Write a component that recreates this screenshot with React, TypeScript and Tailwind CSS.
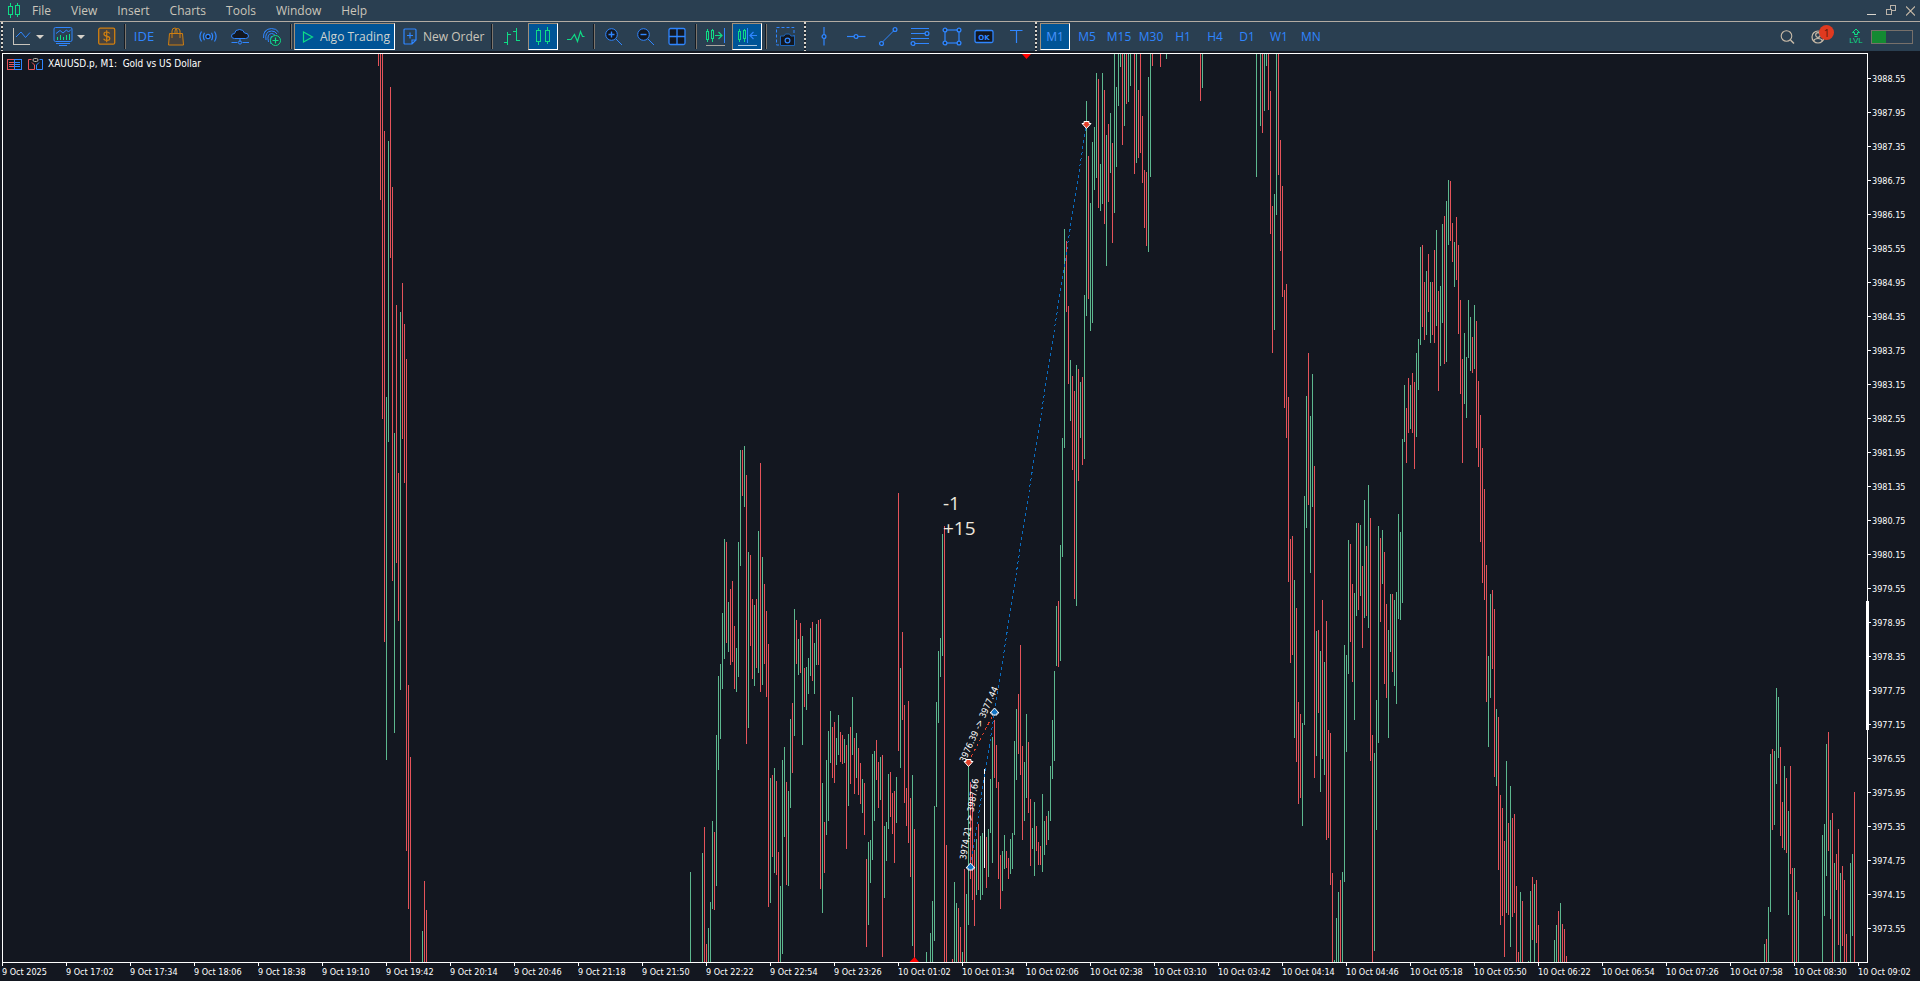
import type { ReactNode } from "react";

const UP = "#5db88f";
const DOWN = "#e5535a";
const BLUE = "#2f86ff";
const GREEN = "#0fdc86";
const INK = "#131720";
const SAND = "#c9bba8";

/* Runs of one-minute bars: first x, then one "<direction><high>-<low>" per 2px slot, "." for an empty slot. */
const RUNS: [number, string][] = [
  [378, "r54-66 r54-200 r54-419 r131-642 g397-760 g141-442 r87-258 r187-581 g433-733 r305-563 r473-621 g312-690 r283-439 r324-483 r359-851 r685-909 r757-962 . . . . . g931-962 r881-962 r910-962"],
  [690, "g872-962 . . . . . g853-962 r827-962 r944-962 g928-962 g902-962 g821-909 r832-910 g735-886 g676-770 g664-739 g613-689 g539-659 r542-643 g602-652 r589-665 r581-662 r626-689 g648-692 g542-677 g450-566 r450-496 g446-507 r475-744 g552-728 r555-646 r599-679 g605-686 r599-668 g531-673 r463-692 g557-685 r584-664 r611-697 r644-907"],
  [770, "g778-903 r775-857 g768-873 r781-875 r852-962 g886-962 g760-954 g747-837 r782-885 g791-886 g719-808 r703-773 g609-736 r620-664 g639-675 r623-673 g636-745 r668-707 g667-710 g658-694 g628-676 r622-681 g643-694 g624-665 r620-665 r619-889 g783-913 r822-873 g760-835 g731-821 g711-763 r727-778 r722-783 g738-765 g715-755 r732-762 r735-764 g739-763 r745-849 g734-806"],
  [850, "r727-784 g697-755 r738-794 g733-778 r748-795 r763-804 g779-813 r783-835 r859-947 g842-925 g840-883 g754-860 g751-821 r740-780 r762-808 g757-800 r755-957 g826-898 g822-861 g774-829 r772-817 r793-834 r791-863 g777-823 r493-751 g668-768 r632-720 r705-803 r788-826 r701-843 r798-877 g775-946 r829-962"],
  [926, "g952-962 . g933-962 g901-962 g806-941 g702-807 g651-723 g638-677 g534-656 r526-962 r845-962 . . r959-962 g882-962 g903-962 r908-962 r927-962 g952-962 r869-962 g894-962 g766-925 r782-879 r794-900 r850-926 g839-895 r824-890 g836-900 g833-895 w769-868 r837-888 g829-877 g779-833 g737-863 r720-778 r745-788 r782-879"],
  [1000, "r855-909 g851-891 g835-869 r851-868 r858-879 g839-874 g833-869 g741-835 g709-780 r694-754 r645-775 r746-840 g762-821 g714-798 r742-813 r799-866 g828-849 g802-876 r826-851 r842-865 r846-865 g794-872 g821-855 r816-845 g811-840 g766-821 g720-779 g671-761 g606-666 r601-667 g545-661 g438-557 g229-448 r241-312 r306-384 g360-421 r376-470 r391-599 g365-606 r369-481"],
  [1080, "g382-438 r377-465 g295-459 g101-316 r156-299 g203-331 g142-323 g127-190 g73-178 r79-208 g164-211 g73-204 r90-224 g135-266 r124-202 g113-173 r143-243 g54-213 g87-167 g54-106 g54-67 r54-145 g54-126 r54-104 g54-102 g54-86 . r54-174 g54-163 r90-158 r54-153 r116-183 r170-228 r172-246 g77-252 g54-177 r54-66 . . . r54-67 . . g54-59"],
  [1200, "r54-101 g54-88"],
  [1256, "g54-177 . g54-126 r54-133 g54-111 g54-66 r54-110 r91-234 r206-353 g194-330 g54-215 r54-175 r140-251 r186-297 r290-408 r284-438 r397-582 r539-663 r536-655 g580-738 r608-762 r702-804 r714-798 g723-826 g496-725 g396-528 r353-505 g416-573 g374-507 r466-778 g631-756 r630-713 g651-792 r600-759 g662-775 r621-840 r730-838 r733-885 r873-962"],
  [1334, "g960-962 g918-962 g892-962 r880-962 g872-962 g645-882 g655-752 g540-674 r544-642 r584-682 g593-720 g523-616 r523-610 g525-596 r566-648 g500-618 r546-616 g485-628 r518-761 r735-962 g753-951 g700-830 g526-743 r538-622 g530-584 r552-684 r604-698 g630-738 g594-652 r594-672 g600-686 g592-704 g514-619 g532-620 g439-603 g385-442 r408-463 r378-433 g385-429 r373-433 r382-469 g353-437 g339-390"],
  [1420, "g247-345 r245-327 r282-340 g271-335 r254-312 g282-343 r282-335 r250-343 g230-326 r291-391 g286-366 g224-323 r216-364 g201-362 g180-245 r181-241 r223-262 g242-287 r217-280 r245-334 r300-394 r359-463 g333-404 g357-418 g300-358 g317-371 r337-373 g305-369 r321-448 r381-467 r415-542 r448-583 r489-600 r565-702 g656-747 g594-698 r590-669 r609-777 g709-786 r717-870"],
  [1500, "r795-925 r808-916 r841-957 g761-913 r823-915 g786-947 r818-917 r814-913 r886-962 r952-962 g892-962 r901-962 . . g961-962 g891-962 r877-940 g884-962 r880-943 r925-962 . . . . . . . g940-962 g925-962 r911-962 g903-962 r924-962 r929-962 r956-962"],
  [1764, "g944-962 r939-962 g907-962 g754-912 r749-830 g751-825 g688-784 g697-758 r747-836 r802-848 g766-850 r778-853 g811-915 r766-874 r868-962 g868-962 r892-962 g900-962"],
  [1822, "g835-962 g824-916 g744-876 r732-851 g820-919 r813-962 g863-962 r854-890 r829-945 g873-962 r866-946 r880-962 r934-962 . g863-962 g854-936 r792-962"],
];

const TONE: Record<string, string> = { g: UP, r: DOWN, w: "#ffffff" };

const BARS = RUNS.flatMap(([start, run]) =>
  run
    .split(" ")
    .map((slot, i) => ({ slot, x: start + i * 2 }))
    .filter(({ slot }) => slot !== ".")
    .map(({ slot, x }) => {
      const [high, low] = slot.slice(1).split("-").map(Number);
      return { x, high, low, fill: TONE[slot[0]] };
    }),
);

const PRICES = Array.from({ length: 26 }, (_, i) => (3988.55 - i * 0.6).toFixed(2));

const TIMES = [
  "9 Oct 2025", "9 Oct 17:02", "9 Oct 17:34", "9 Oct 18:06", "9 Oct 18:38", "9 Oct 19:10", "9 Oct 19:42",
  "9 Oct 20:14", "9 Oct 20:46", "9 Oct 21:18", "9 Oct 21:50", "9 Oct 22:22", "9 Oct 22:54", "9 Oct 23:26",
  "10 Oct 01:02", "10 Oct 01:34", "10 Oct 02:06", "10 Oct 02:38", "10 Oct 03:10", "10 Oct 03:42", "10 Oct 04:14",
  "10 Oct 04:46", "10 Oct 05:18", "10 Oct 05:50", "10 Oct 06:22", "10 Oct 06:54", "10 Oct 07:26", "10 Oct 07:58",
  "10 Oct 08:30", "10 Oct 09:02",
];

const FRAMES = ["M1", "M5", "M15", "M30", "H1", "H4", "D1", "W1", "MN"];
const MENUS = ["File", "View", "Insert", "Charts", "Tools", "Window", "Help"];

function Icon({ children, color = BLUE }: { children: ReactNode; color?: string }) {
  return (
    <svg width="20" height="21" viewBox="0 0 20 21" fill="none" stroke={color} strokeWidth="1" aria-hidden="true" className="shrink-0">
      {children}
    </svg>
  );
}

function Tool({ label, active, children }: { label: string; active?: boolean; children: ReactNode }) {
  return (
    <button
      type="button"
      aria-label={label}
      className={
        active
          ? "mx-px flex h-[27px] w-[30px] shrink-0 items-center justify-center border border-t-[#a08e7a] border-r-white border-b-white border-l-[#a08e7a] bg-[#005496]"
          : "flex h-[27px] w-8 shrink-0 items-center justify-center"
      }
    >
      {children}
    </button>
  );
}

function Divider() {
  return (
    <div className="flex w-[6px] shrink-0 justify-center">
      <div className="h-[25px] w-[2px] border-r border-[#7d756c] bg-[#141a22]" />
    </div>
  );
}

function Grip() {
  return (
    <div className="flex w-[7px] shrink-0 justify-center self-stretch">
      <div className="w-[2px] bg-[repeating-linear-gradient(to_bottom,#d8d4cc_0,#d8d4cc_2px,#1b2530_2px,#1b2530_4px)]" />
    </div>
  );
}

function Caret() {
  return (
    <svg width="8" height="4" viewBox="0 0 8 4" fill="#d6d2ca" aria-hidden="true">
      <path d="M0 0H8L4 4Z" />
    </svg>
  );
}

function Knob({ x, y }: { x: number; y: number }) {
  return <circle cx={x} cy={y} r="1.9" fill="#203448" strokeWidth="1.3" />;
}

function SmallCandles() {
  return (
    <g stroke={GREEN} shapeRendering="crispEdges">
      <rect x="1.5" y="5.5" width="2" height="8" />
      <path d="M2.5 3V5M2.5 14V16" />
      <rect x="6.5" y="4.5" width="2" height="8" />
      <path d="M7.5 3V4M7.5 13V16" />
    </g>
  );
}

function MenuBar() {
  return (
    <header className="flex h-[21px] items-center pl-[7px] pr-[5px]">
      <svg width="13" height="15" viewBox="0 0 13 15" fill="none" stroke={GREEN} shapeRendering="crispEdges" aria-hidden="true">
        <path d="M3.5 0V4M3.5 12V15M10.5 0V2M10.5 12V14" />
        <rect x="1.5" y="3.5" width="4" height="8" />
        <rect x="8.5" y="2.5" width="4" height="9" />
      </svg>
      <nav className="ml-3 flex gap-5 text-[12px] leading-5 text-[#cbc6bb]">
        {MENUS.map((m) => (
          <button key={m} type="button">{m}</button>
        ))}
      </nav>
      <div className="ml-auto flex items-center gap-[10px]">
        <button type="button" aria-label="Minimize">
          <svg width="9" height="11" viewBox="0 0 9 11" stroke="#d8d4cc" shapeRendering="crispEdges"><path d="M0 9.5H9" /></svg>
        </button>
        <button type="button" aria-label="Restore">
          <svg width="10" height="11" viewBox="0 0 10 11" fill="none" stroke="#b9b2a8" shapeRendering="crispEdges">
            <rect x="4.5" y="0.5" width="5" height="5" />
            <rect x="0.5" y="4.5" width="5" height="5" fill="#2a3f51" />
          </svg>
        </button>
        <button type="button" aria-label="Close">
          <svg width="9" height="10" viewBox="0 0 9 10" stroke={SAND} strokeWidth="1.1"><path d="M0 .5L9 9.5M9 .5L0 9.5" /></svg>
        </button>
      </div>
    </header>
  );
}

function Toolbar() {
  return (
    <div className="flex h-[30px] items-center border-t border-[#b3aca3] pr-[7px]">
      <div className="flex w-[6px] shrink-0 self-stretch pl-px">
        <div className="w-[2px] bg-[repeating-linear-gradient(to_bottom,#d8d4cc_0,#d8d4cc_2px,#1b2530_2px,#1b2530_4px)]" />
      </div>
      <button type="button" aria-label="Line chart" className="flex w-[42px] shrink-0 items-center gap-[4px] pl-[6px]">
        <Icon>
          <path d="M1.5 2V18.5M1 18.5H18" stroke="#c8c4bc" shapeRendering="crispEdges" />
          <path d="M4 11L9 6L13.5 11.5L18 6.5" />
        </Icon>
        <Caret />
      </button>
      <button type="button" aria-label="Templates" className="flex w-[43px] shrink-0 items-center gap-[4px] pl-[5px]">
        <Icon>
          <rect x="1" y="1.5" width="18" height="14" rx="1.5" />
          <path d="M3 7.5L7 4.5L10 7L13.5 4L15.5 6L18 3.5" />
          <path d="M4.5 11V14M7.5 9V14M10.5 11V14M13.5 9V14M16.5 8V14" stroke={GREEN} shapeRendering="crispEdges" />
          <path d="M3 17.5H17M6 19.5H14" />
        </Icon>
        <Caret />
      </button>
      <div className="flex w-[31px] shrink-0 justify-center">
        <button type="button" aria-label="Symbols">
          <Icon color="#d07f10">
            <rect x="1.7" y="2.2" width="16" height="16" rx="1.5" fill="#45423f" strokeWidth="1.3" />
            <path d="M12.7 7.5Q12 6 9.7 6Q7 6 7 8Q7 9.7 9.7 10.2Q12.8 10.7 12.8 12.6Q12.8 14.5 9.8 14.5Q7.3 14.5 6.6 12.8M9.7 4.3V16.3" strokeWidth="1.2" />
          </Icon>
        </button>
      </div>
      <Divider />
      <button type="button" className="h-[27px] w-8 shrink-0 text-[13px] text-[#2f86ff]">IDE</button>
      <Tool label="Market">
        <Icon color="#d07f10">
          <path d="M3.5 7.5H16.5L17.5 19H2.5Z" fill="#45423f" />
          <path d="M6 12V5Q6 2 9 2Q11 2 11 5V7M9 7V5Q9 2.5 11.5 2.5Q14 2.5 14 5V12" />
        </Icon>
      </Tool>
      <Tool label="Signals">
        <Icon>
          <circle cx="10" cy="10.5" r="2.2" fill={INK} strokeWidth="1.2" />
          <path d="M6.5 6.8Q4.3 10.5 6.5 14.2M13.5 6.8Q15.7 10.5 13.5 14.2M3.5 5.5Q.3 10.5 3.5 15.5M16.5 5.5Q19.7 10.5 16.5 15.5" strokeWidth="1.2" />
        </Icon>
      </Tool>
      <Tool label="Virtual hosting">
        <Icon>
          <path d="M4.5 12.5Q1.5 12.5 1.5 10Q1.5 7.5 4.5 7.5Q5 3.5 9.5 3.5Q13.5 3.5 14.5 7Q18.5 7 18.5 10Q18.5 12.5 15.5 12.5Z" fill={INK} />
          <path d="M10 13V16M1.5 16.5H7.5M12.5 16.5H19" />
          <circle cx="10" cy="16.5" r="1.6" />
        </Icon>
      </Tool>
      <Tool label="Community">
        <Icon>
          <path d="M1.5 12Q1 3 9.5 2.5Q14.5 2.5 16.5 6M4 14Q2.5 5.5 9.5 5Q13.5 5 15 8M6.5 16Q4.5 8 9.5 7.5Q12 7.5 13 9.5M9 18Q7.5 13 9.5 10M4 4.5L2.5 6.5" />
          <circle cx="13.5" cy="14.5" r="5" stroke={GREEN} fill="#263d4b" />
          <path d="M13.5 11.5V17.5M10.5 14.5H16.5" stroke={GREEN} strokeWidth="1.2" />
        </Icon>
      </Tool>
      <Divider />
      <button
        type="button"
        className="flex h-[27px] w-[101px] shrink-0 items-center gap-[6px] border border-t-[#a08e7a] border-r-white border-b-white border-l-[#a08e7a] bg-[#005496] pl-[7px] text-[12px] whitespace-nowrap text-[#cfd3cf]"
      >
        <svg width="12" height="12" viewBox="0 0 12 12" fill="none" stroke={GREEN} strokeWidth="1.2" aria-hidden="true"><path d="M1.5 1V11L10.5 6Z" /></svg>
        Algo Trading
      </button>
      <button type="button" className="flex h-[27px] w-[94px] shrink-0 items-center gap-[6px] pl-[8px] text-[12px] whitespace-nowrap text-[#cbc6bb]">
        <svg width="14" height="17" viewBox="0 0 14 17" fill="none" stroke={BLUE} strokeWidth="1.2" aria-hidden="true">
          <path d="M9 16H2Q1 16 1 15V2Q1 1 2 1H12Q13 1 13 2V12ZM9 16V12H13M7 4.5V10.5M4 7.5H10" />
        </svg>
        New Order
      </button>
      <Divider />
      <Tool label="Bar chart">
        <Icon color={GREEN}>
          <path d="M6.5 6V19M3 16.5H6M7 8.5H10M15.5 2V15M12 5.5H15M16 14.5H19" shapeRendering="crispEdges" />
        </Icon>
      </Tool>
      <Tool label="Candlesticks" active>
        <Icon color={GREEN}>
          <g shapeRendering="crispEdges">
            <rect x="3.5" y="4.5" width="4" height="11" />
            <path d="M5.5 2V4M5.5 16V19M14.5 1V4M14.5 16V18" />
            <rect x="12.5" y="4.5" width="4" height="11" />
          </g>
        </Icon>
      </Tool>
      <Tool label="Line">
        <Icon color={GREEN}><path d="M2 13.5H6L9.5 8.5L12.5 15.5L15.5 5.5L17.5 10.5H19.5" strokeWidth="1.2" /></Icon>
      </Tool>
      <Divider />
      <Tool label="Zoom in">
        <Icon>
          <circle cx="8.5" cy="8.5" r="5.8" fill={INK} />
          <path d="M13 13L19 19" />
          <path d="M8.5 5.5V11.5M5.5 8.5H11.5" strokeWidth="1.4" />
        </Icon>
      </Tool>
      <Tool label="Zoom out">
        <Icon>
          <circle cx="8.5" cy="8.5" r="5.8" fill={INK} />
          <path d="M13 13L19 19" />
          <path d="M5.5 8.5H11.5" strokeWidth="1.4" />
        </Icon>
      </Tool>
      <Tool label="Tile windows">
        <Icon>
          <rect x="2" y="2.5" width="16" height="16" rx="1.5" fill={INK} strokeWidth="1.3" />
          <path d="M10 2.5V18.5M2 10.5H18" strokeWidth="1.3" />
        </Icon>
      </Tool>
      <Divider />
      <Tool label="Chart shift">
        <Icon>
          <SmallCandles />
          <path d="M10 9.5H16.5M13.5 6L17 9.5L13.5 13" stroke={GREEN} strokeWidth="1.2" />
          <path d="M19.5 2V17" />
          <path d="M1 19.5H20" stroke="#a9a59e" />
        </Icon>
      </Tool>
      <Tool label="Auto scroll" active>
        <Icon>
          <SmallCandles />
          <path d="M10.5 2V17" />
          <path d="M13.5 9.5H20M16.5 6L13 9.5L16.5 13" strokeWidth="1.2" />
          <path d="M1 19.5H20" stroke="#a9c4d9" />
        </Icon>
      </Tool>
      <Divider />
      <Tool label="Screenshot">
        <Icon>
          <rect x="1.5" y="1.5" width="17.5" height="17.5" strokeDasharray="3 2" />
          <path d="M5.5 10H9L10.5 8H14.5L16 10H19.5V19.5H5.5Z" fill={INK} stroke="#1f66b8" />
          <circle cx="12.5" cy="14.5" r="2.4" strokeWidth="1.2" />
        </Icon>
      </Tool>
      <Grip />
      <Tool label="Vertical line"><Icon><path d="M10 1V19.5" strokeWidth="1.2" /><Knob x={10} y={10.5} /></Icon></Tool>
      <Tool label="Horizontal line"><Icon><path d="M1 10.5H19.5" strokeWidth="1.2" /><Knob x={10} y={10.5} /></Icon></Tool>
      <Tool label="Trend line"><Icon><path d="M3 17.5L17 3.5" /><Knob x={3.5} y={17.5} /><Knob x={17} y={3.5} /></Icon></Tool>
      <Tool label="Fibonacci">
        <Icon><path d="M1 2.5H19M1 7.5H15M1 12.5H19M5 17.5H19" strokeWidth="1.2" /><Knob x={17} y={7.5} /><Knob x={3} y={17.5} /></Icon>
      </Tool>
      <Tool label="Rectangle">
        <Icon><rect x="3" y="4" width="14" height="13" strokeWidth="1.2" /><Knob x={3} y={4} /><Knob x={17} y={4} /><Knob x={3} y={17} /><Knob x={17} y={17} /></Icon>
      </Tool>
      <Tool label="Button object">
        <Icon>
          <rect x="1" y="4.5" width="18" height="12" rx="1.5" fill={INK} strokeWidth="1.3" />
          <text x="10" y="13.5" textAnchor="middle" fill={BLUE} stroke="none" className="font-['DejaVu_Sans',sans-serif] text-[7px] font-bold">OK</text>
        </Icon>
      </Tool>
      <Tool label="Text"><Icon><path d="M4 4.5H16.5M10.5 4.5V17" strokeWidth="1.2" /></Icon></Tool>
      <Grip />
      {FRAMES.map((f, i) => (
        <button
          key={f}
          type="button"
          className={
            i === 0
              ? "mx-px h-[27px] w-[30px] shrink-0 border border-t-[#a08e7a] border-r-white border-b-white border-l-[#a08e7a] bg-[#005496] text-[12px] text-[#4b94ff]"
              : "h-[27px] w-8 shrink-0 text-[12px] text-[#2f86ff]"
          }
        >
          {f}
        </button>
      ))}
      <div className="ml-auto flex shrink-0 items-center">
        <button type="button" aria-label="Search" className="mr-[14px]">
          <svg width="16" height="16" viewBox="0 0 16 16" fill="none" stroke={SAND} strokeWidth="1.1"><circle cx="6.5" cy="7" r="5.3" /><path d="M10.5 11L14 14.5" strokeWidth="1.5" /></svg>
        </button>
        <button type="button" aria-label="Account notifications" className="relative mr-[14px] h-[21px] w-6">
          <svg width="16" height="21" viewBox="0 0 16 21" fill="none" stroke={SAND} strokeWidth="1.2">
            <circle cx="8" cy="11" r="6" /><circle cx="8" cy="9" r="2.3" /><path d="M3.5 15Q4.5 12.5 8 12.5Q11.5 12.5 12.5 15" />
          </svg>
          <span className="absolute -top-px right-0 flex h-[15px] w-[15px] items-center justify-center rounded-full bg-[#e03a20] text-[10px] leading-none text-[#571508]">1</span>
        </button>
        <div className="mr-[7px] flex w-4 flex-col items-center text-[#0fdc86]">
          <svg width="10" height="9" viewBox="0 0 10 9" fill="none" stroke={GREEN} aria-hidden="true"><path d="M5 1L1.5 4.5H3.5V6.5H6.5V4.5H8.5ZM3.5 8.5H6.5" /></svg>
          <span className="font-['Liberation_Sans',sans-serif] text-[8px] leading-[8px]">LVL</span>
        </div>
        <div className="flex h-[14px] w-[42px] border border-[#77706a]"><div className="w-[14px] bg-[#148a32]" /></div>
      </div>
    </div>
  );
}

function Marker({ x, y, fill, down }: { x: number; y: number; fill: string; down?: boolean }) {
  return (
    <path
      d={down ? "M-2.500 -3H2.500V-1H4.500L0 4L-4.500 -1H-2.500Z" : "M-2.500 3H2.500V1H4.500L0 -4L-4.500 1H-2.500Z"}
      transform={`translate(${x} ${y})`}
      fill={fill}
      stroke="#ffffff"
    />
  );
}

function Plot() {
  return (
    <div className="relative ml-[2px] min-w-0 flex-1 overflow-hidden border border-white">
      <svg className="absolute inset-0 h-full w-full" role="img" aria-label="XAUUSD one minute chart">
        <g transform="translate(-3 -54)">
          <g shapeRendering="crispEdges">
            {BARS.map((b) => (
              <rect key={b.x} x={b.x} y={b.high} width="1" height={b.low - b.high} fill={b.fill} />
            ))}
            <path d="M970.5 866L1086.5 124" stroke="#0a6cc0" strokeDasharray="3 3" />
            <path d="M968.5 762L994.5 712" stroke="#e2402a" strokeDasharray="3 3" />
          </g>
          <path d="M1022 54H1031L1026.5 59Z" fill="#ff0000" />
          <path d="M909.5 962H919L914.5 957Z" fill="#ff0000" />
          <Marker x={1086.5} y={124.5} fill="#e2402a" down />
          <Marker x={968.5} y={762.5} fill="#e2402a" down />
          <Marker x={994.5} y={712} fill="#1273c4" />
          <Marker x={970.5} y={867} fill="#1273c4" />
          <g fill="#ffffff" className="font-['DejaVu_Sans_Condensed','DejaVu_Sans',sans-serif] text-[9px]">
            <text transform="translate(965 763) rotate(-66)">3976.39 -&gt; 3977.44</text>
            <text transform="translate(966 860) rotate(-81)">3974.21 -&gt; 3987.66</text>
          </g>
          <g fill="#eee8de" className="text-[19px]">
            <text x="943" y="510">-1</text>
            <text x="943" y="535">+15</text>
          </g>
        </g>
      </svg>
      <div className="relative flex items-center pt-[4px] pl-[4px] text-[10px] leading-3 text-white">
        <svg width="15" height="11" viewBox="0 0 15 11" fill="none" shapeRendering="crispEdges" aria-hidden="true">
          <path d="M7 .5H.5V10.5H7M2 3.5H7M2 5.5H7M2 7.5H7" stroke={DOWN} />
          <path d="M7 .5H14.5V10.5H7M8 3.5H13M8 5.5H13M8 7.5H13M7.5 0V11" stroke={BLUE} />
        </svg>
        <svg width="15" height="12" viewBox="0 0 15 12" fill="none" className="ml-[6px]" aria-hidden="true">
          <path d="M3.5 1.5H.5V11.5H6.5V7L4 4.5" stroke={DOWN} />
          <path d="M11.5 1.5H14.5V11.5H8.5V7L11 4.5" stroke={BLUE} />
          <rect x="5" y=".5" width="5" height="3" rx="1.5" stroke="#b9b2a8" />
        </svg>
        <h1 className="ml-[5px] font-['DejaVu_Sans_Condensed','DejaVu_Sans',sans-serif] whitespace-pre">XAUUSD.p, M1:  Gold vs US Dollar</h1>
      </div>
    </div>
  );
}

export default function App() {
  return (
    <div className="flex h-screen flex-col overflow-hidden bg-[#131720] font-['Open_Sans','Noto_Sans',sans-serif]">
      <div className="shrink-0 bg-[#2a3f51]">
        <MenuBar />
        <Toolbar />
      </div>
      <main className="flex min-h-0 flex-1 flex-col pt-[2px] font-normal">
        <div className="flex min-h-0 flex-1">
          <Plot />
          <div className="relative w-[52px] shrink-0 pt-[8px]">
            <div className="absolute top-[548px] -left-[2px] h-[129px] w-[3px] bg-white" />
            <ul className="font-['DejaVu_Sans_Condensed','DejaVu_Sans',sans-serif] text-[9px] text-white">
              {PRICES.map((p) => (
                <li key={p} className="flex h-[34px] gap-px">
                  <span className="mt-[17px] h-px w-[3px] bg-white" />
                  <span className="mt-[12px] leading-3">{p}</span>
                </li>
              ))}
            </ul>
          </div>
        </div>
        <ul className="flex h-[18px] shrink-0 overflow-hidden pl-[2px] font-['DejaVu_Sans_Condensed','DejaVu_Sans',sans-serif] text-[9px] text-white">
          {TIMES.map((t) => (
            <li key={t} className="flex w-16 shrink-0 flex-col whitespace-nowrap">
              <span className="h-[3px] w-px bg-white" />
              <span className="leading-3">{t}</span>
            </li>
          ))}
        </ul>
      </main>
    </div>
  );
}
